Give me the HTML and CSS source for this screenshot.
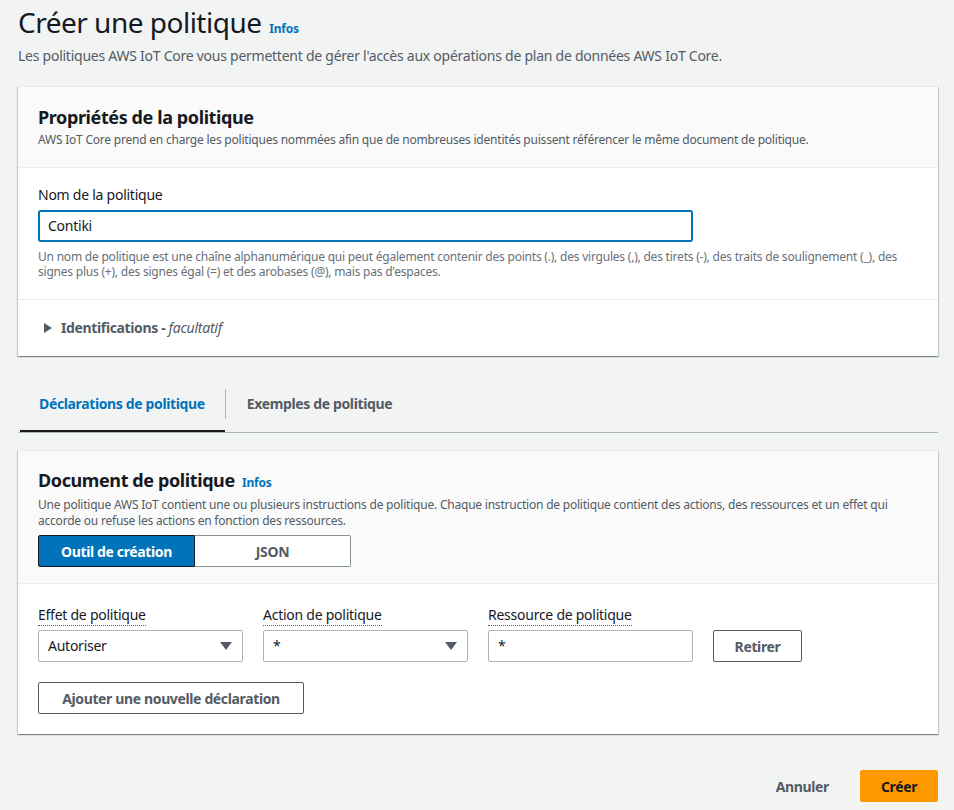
FILE: index.html
```html
<!DOCTYPE html>
<html lang="fr">
<head>
<meta charset="utf-8">
<title>Créer une politique</title>
<link rel="stylesheet" href="styles.css">
</head>
<body>
<main class="page">
  <header class="page-header">
    <h1 class="page-title">Créer une politique <a class="info-link" href="#">Infos</a></h1>
    <p class="page-desc">Les politiques AWS IoT Core vous permettent de gérer l'accès aux opérations de plan de données AWS IoT Core.</p>
  </header>

  <section class="panel">
    <div class="panel-header">
      <h2 class="panel-title">Propriétés de la politique</h2>
      <p class="panel-desc">AWS IoT Core prend en charge les politiques nommées afin que de nombreuses identités puissent référencer le même document de politique.</p>
    </div>
    <div class="panel-body">
      <label class="field-label">Nom de la politique</label>
      <div class="name-input">Contiki</div>
      <p class="help">Un nom de politique est une chaîne alphanumérique qui peut également contenir des points (.), des virgules (,), des tirets (-), des traits de soulignement (_), des signes plus (+), des signes égal (=) et des arobases (@), mais pas d'espaces.</p>
    </div>
    <div class="expander">
      <span class="caret-right"></span>
      <span class="expander-label">Identifications - <em>facultatif</em></span>
    </div>
  </section>

  <nav class="tabs">
    <a class="tab active" href="#">Déclarations de politique</a>
    <span class="tab-sep"></span>
    <a class="tab" href="#">Exemples de politique</a>
  </nav>

  <section class="panel panel-doc">
    <div class="panel-header header-doc">
      <h2 class="panel-title">Document de politique <a class="info-link" href="#">Infos</a></h2>
      <p class="panel-desc">Une politique AWS IoT contient une ou plusieurs instructions de politique. Chaque instruction de politique contient des actions, des ressources et un effet qui accorde ou refuse les actions en fonction des ressources.</p>
      <div class="segmented">
        <button class="seg active">Outil de création</button>
        <button class="seg">JSON</button>
      </div>
    </div>
    <div class="panel-body">
      <div class="statement">
        <div class="col">
          <span class="dotted-label">Effet de politique</span>
          <div class="select"><span>Autoriser</span><span class="caret-down"></span></div>
        </div>
        <div class="col">
          <span class="dotted-label">Action de politique</span>
          <div class="select"><span>*</span><span class="caret-down"></span></div>
        </div>
        <div class="col">
          <span class="dotted-label">Ressource de politique</span>
          <div class="text-input">*</div>
        </div>
        <button class="btn-normal remove">Retirer</button>
      </div>
      <button class="btn-normal add">Ajouter une nouvelle déclaration</button>
    </div>
  </section>

  <footer class="actions">
    <button class="btn-link">Annuler</button>
    <button class="btn-primary">Créer</button>
  </footer>
</main>
</body>
</html>
```
FILE: styles.css
```css
* { box-sizing: border-box; letter-spacing: -0.018em; }
html, body { margin: 0; padding: 0; }
body {
  background: #f2f3f3;
  font-family: "Noto Sans", "Open Sans", sans-serif;
  color: #16191f;
  font-size: 14px;
  line-height: 22px;
}
.page {
  width: 920px;
  margin-left: 18px;
}
.page-header { padding-top: 4px; }
.page-title {
  margin: 0;
  font-size: 28px;
  line-height: 36px;
  font-weight: 400;
  color: #16191f;
}
.info-link {
  font-size: 12px;
  line-height: 1;
  font-weight: 700;
  color: #0073bb;
  text-decoration: none;
  margin-left: 1px;
  letter-spacing: -0.02em;
}
.page-desc {
  margin: 5px 0 0;
  color: #545b64;
  font-size: 14px;
  line-height: 22px;
}
.panel {
  background: #fff;
  margin-top: 19px;
  border-top: 1px solid #eaeded;
  box-shadow: 0 1px 1px 0 rgba(0,28,36,.3), 1px 1px 1px 0 rgba(0,28,36,.15), -1px 1px 1px 0 rgba(0,28,36,.15);
}
.panel-header {
  background: #fafafa;
  padding: 19px 20px 19px;
  border-bottom: 1px solid #eaeded;
}
.panel-title {
  margin: 0;
  font-size: 18px;
  line-height: 22px;
  font-weight: 700;
  letter-spacing: -0.022em;
}
.panel-title .info-link { margin-left: 3px; }
.panel-desc {
  margin: 4px 0 0;
  font-size: 12px;
  line-height: 16px;
  color: #545b64;
}
.panel-body {
  padding: 16px 20px 20px;
}
.field-label {
  display: block;
  font-size: 14px;
  line-height: 22px;
}
.name-input {
  margin-top: 4px;
  width: 655px;
  height: 32px;
  border: 1px solid #0073bb;
  box-shadow: 0 0 0 1px #0073bb inset;
  border-radius: 2px;
  padding: 4px 9px;
  font-size: 14px;
  line-height: 22px;
}
.help {
  margin: 7px 0 0;
  font-size: 12px;
  line-height: 15px;
  color: #687078;
}
.expander {
  border-top: 1px solid #eaeded;
  padding: 17px 20px 17px 26px;
  display: flex;
  align-items: center;
  gap: 9px;
}
.caret-right {
  width: 0; height: 0;
  border-left: 8px solid #545b64;
  border-top: 5px solid transparent;
  border-bottom: 5px solid transparent;
}
.expander-label {
  font-weight: 700;
  color: #545b64;
  line-height: 22px;
  letter-spacing: -0.026em;
}
.expander-label em { font-weight: 400; letter-spacing: -0.018em; }

.tabs {
  margin-top: 30px;
  display: flex;
  align-items: flex-start;
  border-bottom: 1px solid #aab7b8;
  padding-left: 2px;
}
.tab {
  position: relative;
  padding: 7px 20px 17px 19px;
  font-weight: 700;
  color: #545b64;
  text-decoration: none;
  line-height: 22px;
  letter-spacing: -0.026em;
}
.tab.active { color: #0073bb; }
.tab.active::after {
  content: "";
  position: absolute;
  left: 0; right: 0; bottom: 0;
  height: 2px;
  background: #16191f;
}
.tab:last-child { padding-left: 21px; }
.tab-sep {
  width: 1px;
  height: 30px;
  background: #aab7b8;
  margin-top: 3px;
}
.panel-doc { margin-top: 17px; }
.header-doc { padding-top: 18px; padding-bottom: 16px; }
.header-doc .panel-desc { margin-top: 6px; }
.segmented {
  margin-top: 6px;
  display: flex;
  width: 313px;
}
.seg {
  flex: 1;
  height: 32px;
  font-family: inherit;
  font-size: 14px;
  font-weight: 700;
  letter-spacing: -0.026em;
  background: #fff;
  color: #545b64;
  border: 1px solid #879596;
  border-left: none;
  border-radius: 0 2px 2px 0;
  padding: 0;
}
.seg.active {
  background: #0073bb;
  color: #fff;
  border: 1px solid #16191f;
  border-radius: 2px 0 0 2px;
}
.panel-doc .panel-body { padding-top: 20px; padding-bottom: 20px; }
.statement {
  display: flex;
  align-items: flex-end;
  gap: 20px;
}
.col {
  width: 205px;
  display: flex;
  flex-direction: column;
  align-items: flex-start;
  gap: 4px;
}
.dotted-label {
  line-height: 20px;
  border-bottom: 1px dotted #545b64;
  margin-top: 1px;
}
.select, .text-input {
  width: 205px;
  height: 32px;
  border: 1px solid #aab7b8;
  border-radius: 2px;
  padding: 4px 9px;
  display: flex;
  align-items: center;
  justify-content: space-between;
  line-height: 22px;
}
.caret-down {
  width: 0; height: 0;
  border-top: 8px solid #545b64;
  border-left: 6px solid transparent;
  border-right: 6px solid transparent;
  margin-right: 1px;
}
.btn-normal {
  height: 32px;
  padding: 0 10px;
  font-family: inherit;
  font-size: 14px;
  font-weight: 700;
  letter-spacing: -0.026em;
  color: #545b64;
  background: #fff;
  border: 1px solid #545b64;
  border-radius: 2px;
  white-space: nowrap;
}
.remove { width: 89px; }
.add { margin-top: 20px; width: 266px; }

.actions {
  margin-top: 36px;
  display: flex;
  justify-content: flex-end;
  gap: 10px;
}
.btn-link, .btn-primary {
  height: 32px;
  padding: 0 20px;
  font-family: inherit;
  font-size: 14px;
  font-weight: 700;
  letter-spacing: -0.026em;
  border-radius: 2px;
  border: 1px solid transparent;
}
.btn-link { background: transparent; color: #545b64; }
.btn-primary { background: #ff9900; border-color: #ff9900; color: #16191f; width: 78px; padding: 0; }
```
